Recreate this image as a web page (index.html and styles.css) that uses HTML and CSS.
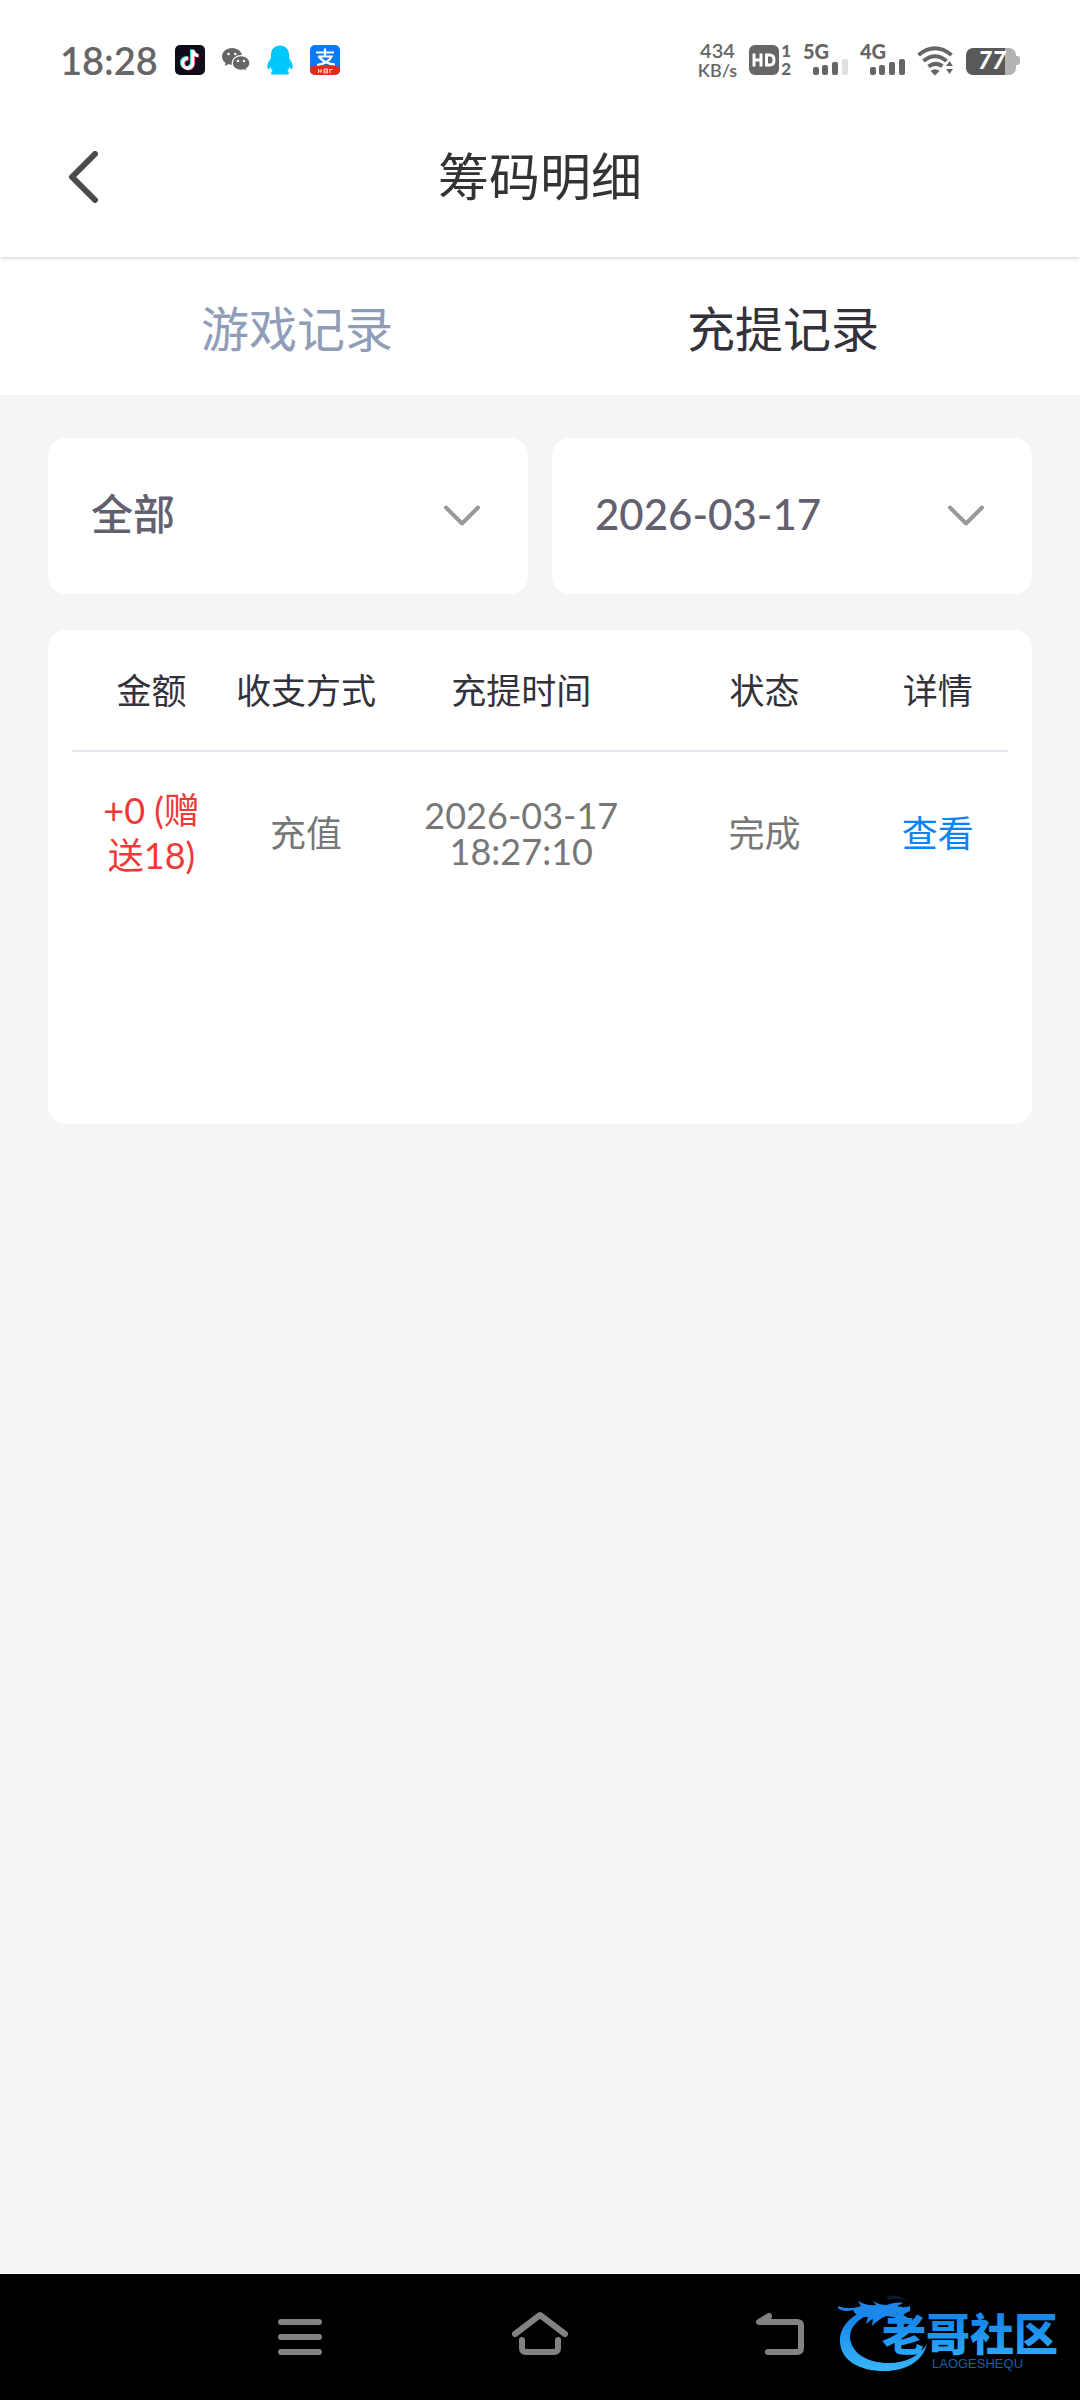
FILE: index.html
```html
<!DOCTYPE html>
<html lang="zh-CN">
<head>
    <meta charset="UTF-8">
    <meta name="viewport" content="width=device-width, initial-scale=1.0">
    <title>筹码明细</title>
    <link rel="stylesheet" href="styles.css">
</head>
<body>
    <!-- Status bar -->
    <div class="status-bar">
        <div class="status-left">
            <span class="clock">18:28</span>
            <svg width="30" height="30" viewBox="0 0 30 30">
                <rect width="30" height="30" rx="5" fill="#0d0c18"/>
                <g fill="none" stroke-width="3.4">
                    <path d="M13 13.2a5 5 0 1 0 4.6 5V5c.4 3.4 2.4 5.2 5.6 5.5" stroke="#27e4e0" transform="translate(-1 -.6)"/>
                    <path d="M13 13.2a5 5 0 1 0 4.6 5V5c.4 3.4 2.4 5.2 5.6 5.5" stroke="#fb2c55" transform="translate(1 .6)"/>
                    <path d="M13 13.2a5 5 0 1 0 4.6 5V5c.4 3.4 2.4 5.2 5.6 5.5" stroke="#fff"/>
                </g>
            </svg>
            <svg width="28" height="24" viewBox="0 0 28 24">
                <path d="M10 0C4.500 0 0 3.800 0 8.500c0 2.700 1.400 5 3.600 6.500l-.9 3 3.500-1.800c1.200.3 2.500.5 3.800.5 5.600 0 10.100-3.700 10.100-8.200S15.600 0 10 0z" fill="#666"/>
                <path d="M19 7.700c-4.900 0-8.800 3.300-8.800 7.300s3.900 7.300 8.800 7.300c1 0 2-.1 2.900-.4l3 1.800-.8-2.700c2.300-1.300 3.900-3.500 3.900-6 0-4-4-7.300-9-7.300z" fill="#666" stroke="#fff" stroke-width="1.2"/>
                <g fill="#fff">
                    <circle cx="6.5" cy="6" r="1.3"/><circle cx="13.3" cy="6" r="1.3"/>
                    <circle cx="16" cy="13" r="1.2"/><circle cx="22" cy="13" r="1.2"/>
                </g>
            </svg>
            <svg width="26" height="30" viewBox="0 0 26 30">
                <path d="M13 .5C7.500.5 4 4.500 4 9.500V13c-1.800 2.500-3.600 5.500-3.700 8.500 0 2 .6 2.800 1.300 2.600.8-.2 1.500-1.200 2-2 .3 1.500 1 2.900 2 4-1 .5-1.500 1.300-1.500 2.100 0 1 .8 1.300 2.500 1.300h13c1.500 0 2.300-.4 2.300-1.300 0-.8-.6-1.600-1.500-2.100 1-1.100 1.700-2.500 2-4 .5.800 1.200 1.800 2 2 .7.200 1.300-.6 1.300-2.600-.1-3-1.900-6-3.700-8.500V9.500C22 4.500 18.500.5 13 .5z" fill="#00c8fa"/>
            </svg>
            <svg width="30" height="30" viewBox="0 0 30 30">
                <rect width="30" height="30" rx="5" fill="#0a7af5"/>
                <path d="M0 22q15-4.500 30 0v3a5 5 0 0 1-5 5H5a5 5 0 0 1-5-5z" fill="#e8281c"/>
                <path d="M6 7.500h18M15 3.500v8M8 11.500h13.500c-2 4.500-7 7.500-14.500 8.500M9 12c4 4.500 8 7 16 7.500" fill="none" stroke="#fff" stroke-width="2.2"/>
                <path d="M8.500 24v4M8 26h4M11 24v4M14 24h3.500v4H14zM14 26h3.500M19 24.500h3.500M20 24v4" fill="none" stroke="#ffd9c4"/>
            </svg>
        </div>
        <div class="status-right">
            <div class="net-speed">
                <span class="speed-num">434</span>
                <span class="speed-unit">KB/s</span>
            </div>
            <div class="hd">
                <svg width="30" height="30" viewBox="0 0 30 30">
                    <rect width="30" height="30" rx="6" fill="#666"/>
                    <path d="M5 8.500v13M12 8.500v13M5 15h7M17.500 10h3.500q4 0 4 5t-4 5h-3.500z" fill="none" stroke="#fff" stroke-width="3"/>
                </svg>
                <div class="sims">
                    <span>1</span>
                    <span>2</span>
                </div>
            </div>
            <svg width="45" height="48" viewBox="0 -8 45 48">
                <text class="net" x="0" y="15">5G</text>
                <g fill="#666">
                    <rect x="10" y="23" width="6" height="8" rx="2"/>
                    <rect x="19" y="21" width="6" height="10" rx="2"/>
                    <rect x="29" y="18" width="6" height="13" rx="2"/>
                    <rect x="39" y="15" width="6" height="16" rx="2" fill="#e0e0e0"/>
                </g>
            </svg>
            <svg width="45" height="48" viewBox="0 -8 45 48">
                <text class="net" x="0" y="15">4G</text>
                <g fill="#666">
                    <rect x="10" y="23" width="6" height="8" rx="2"/>
                    <rect x="19" y="21" width="6" height="10" rx="2"/>
                    <rect x="29" y="18" width="6" height="13" rx="2"/>
                    <rect x="39" y="15" width="6" height="16" rx="2"/>
                </g>
            </svg>
            <svg width="37" height="32" viewBox="0 0 37 32">
                <g fill="none" stroke="#666" stroke-width="4">
                    <path d="M1.500 11Q18 -2.500 34.500 11"/>
                    <path d="M6.500 17Q18 7.500 29.500 17"/>
                    <path d="M11.500 22.500Q18 17.500 25.500 22"/>
                </g>
                <path d="M13.500 27q4.500-3.500 9 0L18 31.500zM29 22l3.500-5 3.500 5zM29 25h7l-3.500 5z" fill="#666"/>
            </svg>
            <svg width="54" height="32" viewBox="0 0 54 32">
                <path d="M39 4h4a7 7 0 0 1 7 7v1h1.500q2.500 0 2.500 3v3q0 3-2.500 3H50v3a7 7 0 0 1-7 7h-4z" fill="#b3b3b3"/>
                <path d="M39 4H7a7 7 0 0 0-7 7v13a7 7 0 0 0 7 7h32z" fill="#595959"/>
                <text class="battery" x="12" y="25">77</text>
            </svg>
        </div>
    </div>

    <!-- Page header -->
    <header class="header">
        <button class="back-btn" type="button" aria-label="返回">
            <svg width="30" height="52" viewBox="0 0 30 52">
                <path d="M27 3 4 26l23 23" fill="none" stroke="#4a4a4a" stroke-width="6" stroke-linecap="round" stroke-linejoin="round"/>
            </svg>
        </button>
        <h1>筹码明细</h1>
    </header>

    <nav class="tabs">
        <button class="tab" type="button">游戏记录</button>
        <button class="tab active" type="button">充提记录</button>
    </nav>

    <main class="content">
        <div class="filters">
            <div class="filter">
                <select class="filter-select" aria-label="类型">
                    <option>全部</option>
                </select>
                <svg class="arrow" width="36" height="22" viewBox="0 0 36 22">
                    <path d="M2 2.500 18 18.500l16-16" fill="none" stroke="#999" stroke-width="4" stroke-linecap="round" stroke-linejoin="round"/>
                </svg>
            </div>
            <div class="filter">
                <select class="filter-select" aria-label="日期">
                    <option>2026-03-17</option>
                </select>
                <svg class="arrow" width="36" height="22" viewBox="0 0 36 22">
                    <path d="M2 2.500 18 18.500l16-16" fill="none" stroke="#999" stroke-width="4" stroke-linecap="round" stroke-linejoin="round"/>
                </svg>
            </div>
        </div>

        <section class="card">
            <table class="records">
                <thead>
                    <tr>
                        <th class="col-amount">金额</th>
                        <th class="col-type">收支方式</th>
                        <th class="col-time">充提时间</th>
                        <th class="col-status">状态</th>
                        <th class="col-detail">详情</th>
                    </tr>
                </thead>
                <tbody>
                    <tr>
                        <td class="amount">+0 (赠送18)</td>
                        <td>充值</td>
                        <td class="time">2026-03-17 18:27:10</td>
                        <td>完成</td>
                        <td><a href="#">查看</a></td>
                    </tr>
                </tbody>
            </table>
        </section>
    </main>

    <!-- System navigation -->
    <nav class="system-nav">
        <button class="nav-btn menu" type="button" aria-label="菜单">
            <svg width="46" height="44" viewBox="0 0 46 44">
                <path d="M4 11h38M4 26h38M4 41h38" fill="none" stroke="#828282" stroke-width="6" stroke-linecap="round"/>
            </svg>
        </button>
        <button class="nav-btn" type="button" aria-label="主页">
            <svg width="58" height="44" viewBox="0 0 58 44">
                <path d="M4 23 29 4l25 19M11 29v8q0 4 4 4h28q4 0 4-4v-8" fill="none" stroke="#828282" stroke-width="6" stroke-linecap="round" stroke-linejoin="round"/>
            </svg>
        </button>
        <button class="nav-btn" type="button" aria-label="返回上一页">
            <svg width="48" height="44" viewBox="0 0 48 44">
                <path d="M13 5 3 11h38q4 0 4 4v22q0 4-4 4H12M13 5l-2 6" fill="none" stroke="#828282" stroke-width="6" stroke-linecap="round" stroke-linejoin="round"/>
            </svg>
        </button>
        <div class="community-logo">
            <svg width="226" height="84" viewBox="0 0 226 84">
                <defs>
                    <linearGradient id="blue" gradientUnits="userSpaceOnUse" x1="0" y1="8" x2="0" y2="78">
                        <stop offset="0" stop-color="#1f86ea"/>
                        <stop offset=".3" stop-color="#1788ec"/>
                        <stop offset="1" stop-color="#36b5f8"/>
                    </linearGradient>
                </defs>
                <g fill="url(#blue)">
                    <path d="M33 17C12 22 1 36 2 50c1 19 20 29 44 29 22 0 39-10 43-27-7 12-22 19-38 19-22 0-38-10-39-26 0-11 9-19 23-24l14-2z"/>
                    <path d="M0 14c7 3 15 3 23 0l-3-5c7 4 13 5 18 4l-3-4c5 3 9 4 14 4 5-2 11-3 16-2l-6 3c4 1 8 2 13 0v5l-6 3-8-1 3 3c4-1 7 0 9 2l-3 3-12-4-7-1c-5 2-9 5-14 10l1-7c-3 1-5 4-7 5l2-7c-8 0-13-2-15-7-6 2-12 1-15-2z"/>
                    <path d="M48 5c8-3 16-1 23 5-7-4-14-4-20-2z" opacity=".2"/>
                    <text class="logo-name" x="44" y="59">老哥社区</text>
                </g>
                <text class="logo-latin" x="94" y="76">LAOGESHEQU</text>
            </svg>
        </div>
    </nav>
</body>
</html>
```
FILE: styles.css
```css
* {
    margin: 0;
    padding: 0;
    box-sizing: border-box;
}

body {
    min-height: 100vh;
    display: flex;
    flex-direction: column;
    background: #f5f5f5;
    font-family: 'Lato', 'Noto Sans CJK SC', sans-serif;
    color: #33323b;
}

button, select {
    border: none;
    background: none;
    font-family: inherit;
    color: inherit;
    cursor: pointer;
}

svg {
    display: block;
    flex-shrink: 0;
}

/* Status bar */
.status-bar {
    height: 96px;
    padding: 24px 60px 0;
    display: flex;
    align-items: center;
    justify-content: space-between;
    background: #fff;
    color: #666;
}

.status-left {
    display: flex;
    align-items: center;
    gap: 17px;
}

.status-right {
    display: flex;
    align-items: center;
    gap: 12px;
}

.clock {
    font-size: 38px;
    line-height: 40px;
    font-weight: 600;
}

.net-speed {
    display: flex;
    flex-direction: column;
    align-items: center;
    font-weight: 600;
}

.speed-num {
    font-size: 20px;
    line-height: 20px;
}

.speed-unit {
    font-size: 18px;
    line-height: 20px;
}

.hd {
    display: flex;
    align-items: center;
    gap: 2px;
}

.sims {
    display: flex;
    flex-direction: column;
    font-size: 17px;
    line-height: 18px;
    font-weight: 900;
}

.net {
    fill: #666;
    font-size: 20px;
    font-weight: 900;
}

.battery {
    fill: #fff;
    font-size: 24px;
    font-weight: 900;
    font-style: italic;
}

/* Header */
.header {
    position: relative;
    z-index: 1;
    height: 161px;
    padding: 0 68px;
    display: grid;
    grid-template-columns: 1fr auto 1fr;
    align-items: center;
    background: #fff;
    box-shadow: 0 3px 3px -1px rgba(0, 0, 0, 0.14);
}

.back-btn {
    justify-self: start;
}

h1 {
    font-size: 51px;
    line-height: 60px;
    font-weight: 400;
    color: #333;
}

/* Tabs */
.tabs {
    padding: 0 54px;
    display: flex;
    background: #fff;
}

.tab {
    flex: 1;
    height: 138px;
    font-size: 48px;
    color: #8f9db8;
}

.tab.active {
    color: #33323b;
}

/* Filters and records */
.content {
    flex: 1;
    padding: 43px 48px;
}

.filters {
    display: grid;
    grid-template-columns: 1fr 1fr;
    gap: 24px;
    margin-bottom: 36px;
}

.filter {
    display: grid;
    align-items: center;
    background: #fff;
    border-radius: 18px;
}

.filter-select, .arrow {
    grid-area: 1 / 1;
}

.filter-select {
    width: 100%;
    height: 156px;
    padding: 0 90px 4px 43px;
    appearance: none;
    font-size: 42px;
    font-weight: 500;
    color: #63616f;
}

.arrow {
    justify-self: end;
    margin-right: 48px;
    pointer-events: none;
}

.card {
    min-height: 494px;
    padding: 0 24px;
    background: #fff;
    border-radius: 18px;
}

.records {
    width: 100%;
    table-layout: fixed;
    border-collapse: collapse;
    text-align: center;
    font-size: 36px;
    line-height: 36px;
}

.records th {
    height: 121px;
    border-bottom: 2px solid #e6e6ee;
    font-size: 35px;
    font-weight: 400;
}

.col-amount {
    width: 17%;
}

.col-type {
    width: 16%;
}

.col-time {
    width: 30%;
}

.col-status {
    width: 22%;
}

.col-detail {
    width: 15%;
}

.records td {
    height: 162px;
    color: #777;
}

.records .amount {
    padding: 0 24px;
    line-height: 45px;
    color: #eb3a38;
}

.records .time {
    padding: 0 36px;
}

.records a {
    color: #0a84f5;
    text-decoration: none;
}

/* System navigation */
.system-nav {
    position: relative;
    height: 127px;
    display: grid;
    grid-template-columns: 3fr 4fr 4fr 4fr 3fr;
    align-items: center;
    border-top: 1px solid #fff;
    background: #000;
}

.nav-btn {
    display: flex;
    justify-content: center;
    padding-bottom: 8px;
}

.nav-btn.menu {
    grid-column: 2;
}

.community-logo {
    position: absolute;
    right: 16px;
    bottom: 24px;
}

.logo-name {
    font-family: 'Noto Sans CJK SC', sans-serif;
    font-size: 44px;
    font-weight: 900;
}

.logo-latin {
    fill: #1560a8;
    font-family: 'Liberation Sans', sans-serif;
    font-size: 13px;
}
```
